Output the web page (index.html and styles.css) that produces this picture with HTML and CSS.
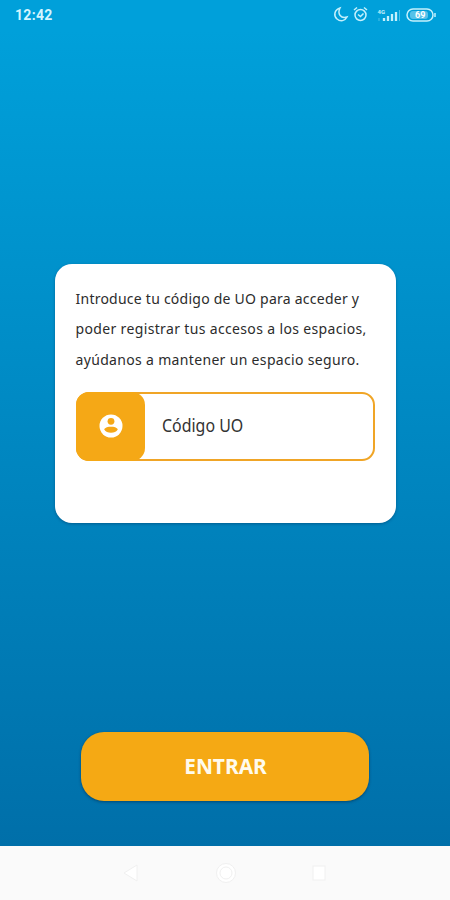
FILE: index.html
```html
<!DOCTYPE html>
<html lang="es">
<head>
<meta charset="utf-8">
<title>Código UO</title>
<link rel="stylesheet" href="styles.css">
</head>
<body>
<div class="screen">
  <header class="status">
    <span class="time">12:42</span>
    <svg class="status-icons" width="106" height="20" viewBox="0 0 106 20" fill="none" stroke="#c5f0fc" stroke-width="1.5">
      <path d="M7 4C1 6 .5 12 4 15c3.500 3 8 2 10-2C8 15 4 10 7 4Z"/>
      <circle cx="27.500" cy="11" r="5.500"/>
      <path d="M21 6l3-2.500M34 6l-3-2.500M25 10.500l2.500 2 3-3"/>
      <path stroke-width="2.300" d="M51 17v-3M55 17v-5M59 17V10M63 17V8"/>
      <path stroke-width="1" opacity=".4" d="M66.500 6v11M46 17v-3"/>
      <text class="network" x="44.500" y="10">4G</text>
      <rect x="74" y="5" width="26" height="12" rx="6"/>
      <rect class="charge" x="77" y="7" width="18" height="8" rx="3"/>
      <path d="M102 9v4"/>
      <text class="battery" x="82" y="14">69</text>
    </svg>
  </header>
  <main class="content">
    <section class="card">
      <p class="intro"><span class="l1">Introduce tu código de UO para acceder y</span><span class="l2">poder registrar tus accesos a los espacios,</span><span class="l3">ayúdanos a mantener un espacio seguro.</span></p>
      <div class="field">
        <div class="field-icon">
          <svg width="24" height="24" viewBox="0 0 24 24"><circle cx="12" cy="12" r="11.500" fill="#fff"/><circle cx="12" cy="7.300" r="3.400" fill="#f5a816"/><path d="M5.200 15.500C5.800 13.200 9.500 12.700 12 12.700s6.200.5 6.800 2.800C17.400 17.600 15 18.800 12 18.800s-5.400-1.200-6.800-3.300Z" fill="#f5a816"/></svg>
        </div>
        <span class="placeholder">Código UO</span>
      </div>
    </section>
    <button class="enter"><span>ENTRAR</span></button>
  </main>
  <nav class="navbar">
    <svg width="20" height="22" viewBox="0 0 20 22"><path d="M16 3v16L3 11Z"/></svg>
    <svg width="22" height="22" viewBox="0 0 22 22"><circle cx="11" cy="11" r="9.500"/><circle cx="11" cy="11" r="6"/></svg>
    <svg width="16" height="22" viewBox="0 0 16 22"><rect x="2" y="4" width="12" height="14"/></svg>
  </nav>
</div>
</body>
</html>
```
FILE: styles.css
```css
* { box-sizing: border-box; }
body { margin: 0; font-family: "Noto Sans", sans-serif; }
.screen { width: 450px; height: 900px; display: flex; flex-direction: column; background: #fafafa; overflow: hidden; }
.status { height: 30px; display: flex; justify-content: space-between; padding: 4px 11px 0 15px; background: #00a0da; }
.time { font: 700 14px/22px Roboto, sans-serif; color: #d4f5ff; letter-spacing: .3px; }
.network { font: 700 6px Roboto, sans-serif; fill: #c5f0fc; stroke: none; }
.charge { fill: #8fd9f3; stroke: none; opacity: .6; }
.battery { font: 700 9px Roboto, sans-serif; fill: #fff; stroke: none; }
.content { height: 816px; display: flex; flex-direction: column; align-items: center; padding-top: 234px; background: linear-gradient(#00a0da, #006fa9); }
.card { width: 341px; height: 259px; padding: 20px 21px 0; background: #fff; border-radius: 17px; box-shadow: 0 1px 3px rgba(0, 40, 80, .4); }
.intro { margin: 0 0 17px; font-size: 14px; line-height: 30.300px; color: #2c2c2c; }
.intro span { display: block; white-space: nowrap; width: max-content; }
.l1 { letter-spacing: .24px; }
.l2 { letter-spacing: .35px; }
.l3 { letter-spacing: .33px; }
.field { width: 299px; height: 69px; display: flex; align-items: center; border: 2px solid #f0a526; border-radius: 13px; }
.field-icon { width: 69px; height: 69px; margin: -2px 0 -2px -2px; display: flex; align-items: center; justify-content: center; background: #f5a816; border-radius: 13px; }
.field-icon svg { margin-left: 1px; }
.placeholder { margin: -2px 0 0 17px; font-size: 17.500px; color: #333; transform: scaleX(.91); transform-origin: left; }
.enter { width: 288px; height: 69px; margin: 209px 0 0; padding: 0 0 4px; border: 0; border-radius: 23px; background: #f5a914; box-shadow: 0 1px 3px rgba(0, 30, 60, .5); font: 700 22px "Noto Sans", sans-serif; color: #fffbed; }
.enter span { display: inline-block; transform: scaleX(.95); }
.navbar { height: 54px; display: flex; align-items: center; padding-left: 121px; background: #fafafa; }
.navbar svg { fill: #fff; stroke: #f0f0f0; stroke-width: 1; }
.navbar svg + svg { margin-left: 74px; }
.navbar svg + svg + svg { margin-left: 74px; }
```
